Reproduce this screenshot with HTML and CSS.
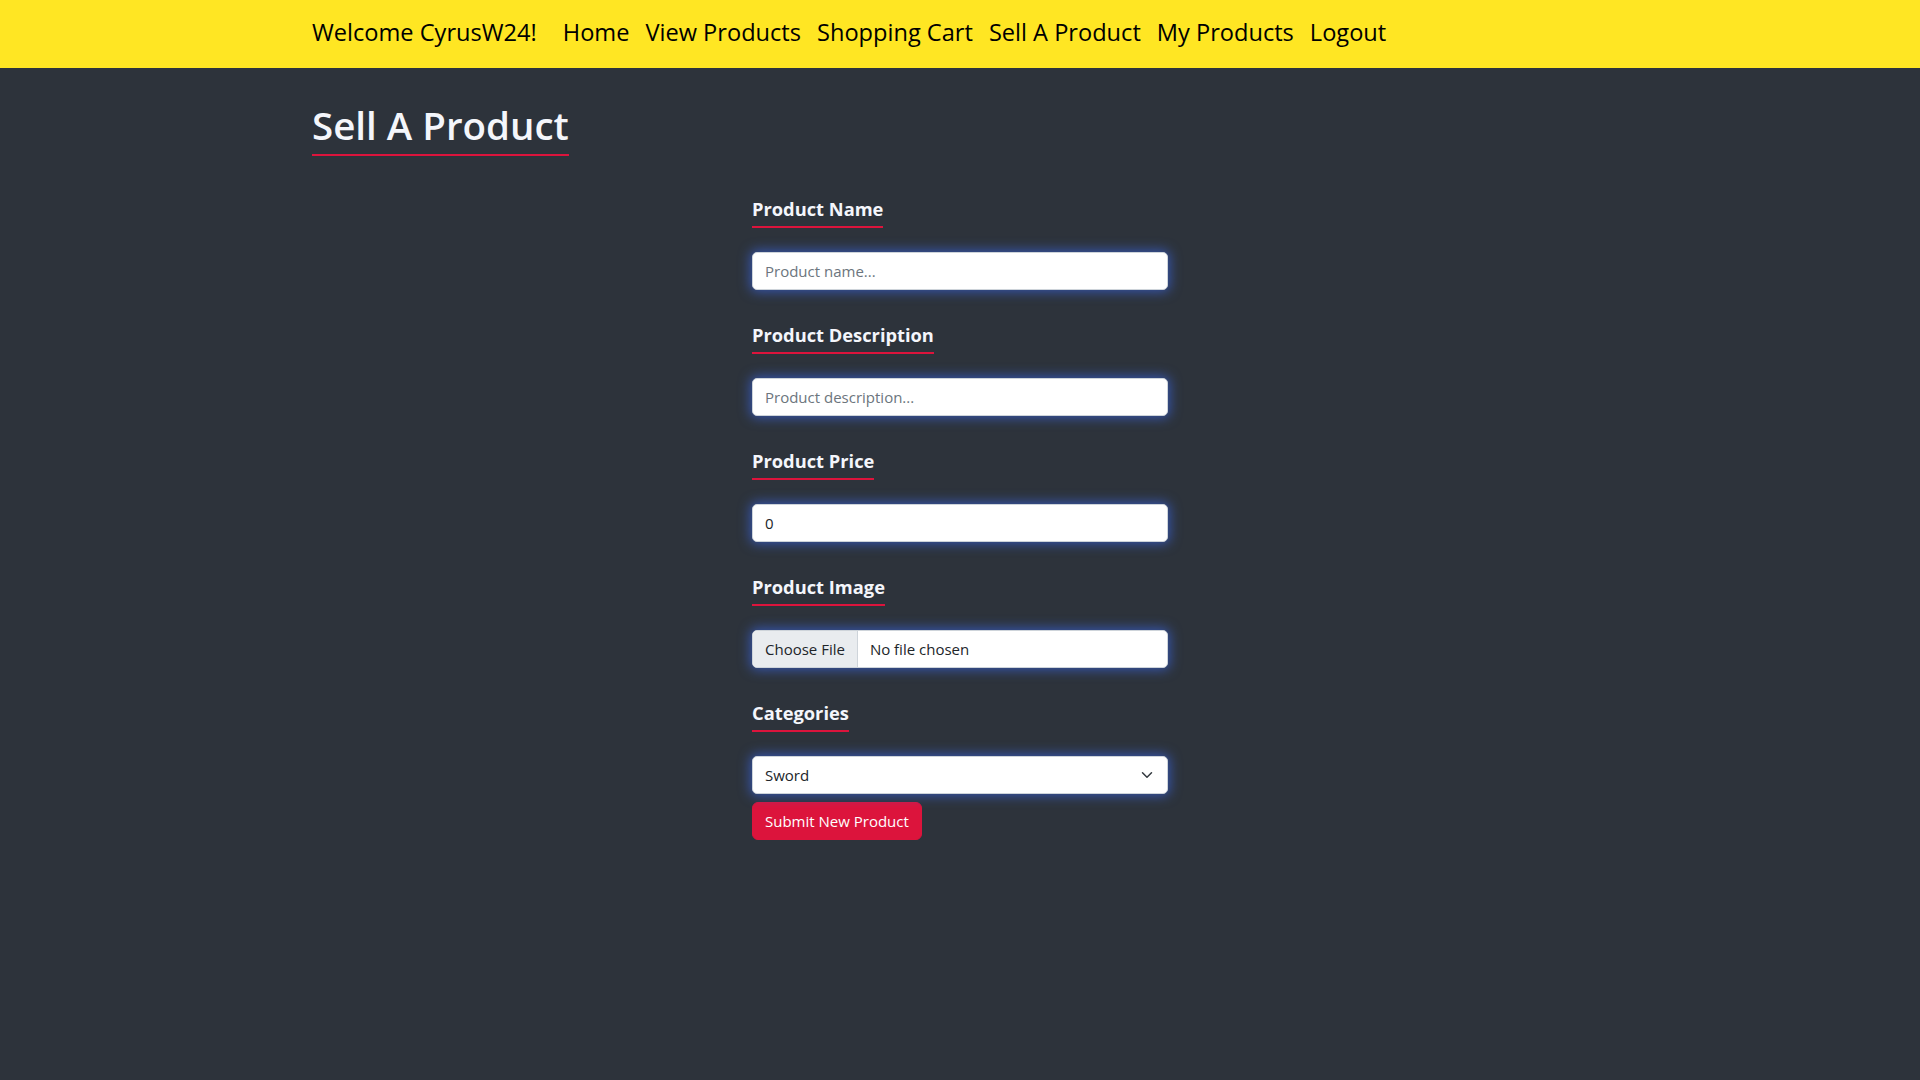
FILE: index.html
```html
<!DOCTYPE html>
<html lang="en">
<head>
<meta charset="utf-8">
<title>Sell A Product</title>
<link rel="stylesheet" href="styles.css">
</head>
<body>
<nav class="navbar">
  <div class="container nav-inner">
    <span class="brand">Welcome CyrusW24!</span>
    <a class="nav-link" href="#">Home</a>
    <a class="nav-link" href="#">View Products</a>
    <a class="nav-link" href="#">Shopping Cart</a>
    <a class="nav-link" href="#">Sell A Product</a>
    <a class="nav-link" href="#">My Products</a>
    <a class="nav-link" href="#">Logout</a>
  </div>
</nav>
<main class="container">
  <h1 class="page-title">Sell A Product</h1>
  <form class="sell-form">
    <div class="group">
      <label class="field-label" for="pname">Product Name</label>
      <input class="field" id="pname" type="text" placeholder="Product name...">
    </div>
    <div class="group">
      <label class="field-label" for="pdesc">Product Description</label>
      <input class="field" id="pdesc" type="text" placeholder="Product description...">
    </div>
    <div class="group">
      <label class="field-label" for="pprice">Product Price</label>
      <input class="field" id="pprice" type="text" value="0">
    </div>
    <div class="group">
      <label class="field-label" for="pimg">Product Image</label>
      <div class="field file-field" id="pimg">
        <span class="file-btn">Choose File</span>
        <span class="file-name">No file chosen</span>
      </div>
    </div>
    <div class="group group-last">
      <label class="field-label" for="pcat">Categories</label>
      <div class="select-wrap">
        <select class="field select" id="pcat">
          <option>Sword</option>
          <option>Shield</option>
          <option>Armor</option>
        </select>
        <svg class="chevron" viewBox="0 0 16 16" width="16" height="12" aria-hidden="true">
          <path d="m2 5 6 6 6-6" fill="none" stroke="#343a40" stroke-width="2" stroke-linecap="round" stroke-linejoin="round"/>
        </svg>
      </div>
    </div>
    <button class="submit" type="button">Submit New Product</button>
  </form>
</main>
</body>
</html>
```

FILE: styles.css
```css
* { box-sizing: border-box; }

html, body {
  margin: 0;
  padding: 0;
}

body {
  background: #2d333b;
  font-family: "Open Sans", "Noto Sans", sans-serif;
  min-height: 1080px;
}

.container {
  width: 1320px;
  margin: 0 auto;
  padding: 0 12px;
}

.navbar {
  background: #ffe623;
  height: 68px;
}

.nav-inner {
  display: flex;
  align-items: center;
  height: 68px;
}

.brand {
  font-size: 23.6px;
  color: #000;
  margin-right: 18px;
  padding-bottom: 4px;
}

.nav-link {
  font-size: 23.6px;
  color: #000;
  text-decoration: none;
  padding: 0 8px 4px;
}

.page-title {
  display: inline-block;
  margin: 34px 0 0;
  font-size: 38.5px;
  line-height: 1.2;
  font-weight: 600;
  color: #f4f6fb;
  padding-bottom: 6px;
  border-bottom: 2px solid #dc143c;
}

.sell-form {
  width: 416px;
  margin: 42px auto 0;
}

.group {
  margin-bottom: 34px;
}

.group-last {
  margin-bottom: 8px;
}

.field-label {
  display: inline-block;
  font-size: 18.3px;
  line-height: 1.2;
  font-weight: 700;
  color: #f4f6fb;
  padding-bottom: 6px;
  border-bottom: 2px solid #dc143c;
  margin-bottom: 24px;
}

.field {
  display: block;
  width: 100%;
  height: 38px;
  padding: 6px 12px;
  font-family: "Open Sans", "Noto Sans", sans-serif;
  font-size: 15px;
  color: #212529;
  background: #fff;
  border: 1px solid #ced4da;
  border-radius: 5px;
  box-shadow: 0 0 12px 2px rgba(58, 98, 214, 0.72);
  outline: none;
}

.field::placeholder {
  color: #6c757d;
}

.file-field {
  display: flex;
  align-items: stretch;
  padding: 0;
  overflow: hidden;
}

.file-btn {
  display: flex;
  align-items: center;
  padding: 0 12px;
  background: #e9ecef;
  border-right: 1px solid #ced4da;
  color: #212529;
}

.file-name {
  display: flex;
  align-items: center;
  padding: 0 12px;
  color: #212529;
}

.select-wrap {
  position: relative;
}

.select {
  appearance: none;
  -webkit-appearance: none;
  padding-right: 36px;
}

.chevron {
  position: absolute;
  right: 13px;
  top: 13px;
  width: 16px;
  height: 12px;
  pointer-events: none;
}

.submit {
  display: inline-block;
  height: 38px;
  padding: 6px 12px;
  font-family: "Open Sans", "Noto Sans", sans-serif;
  font-size: 15px;
  color: #fff;
  background: #dc143c;
  border: 1px solid #dc143c;
  border-radius: 6px;
  cursor: pointer;
}
```
